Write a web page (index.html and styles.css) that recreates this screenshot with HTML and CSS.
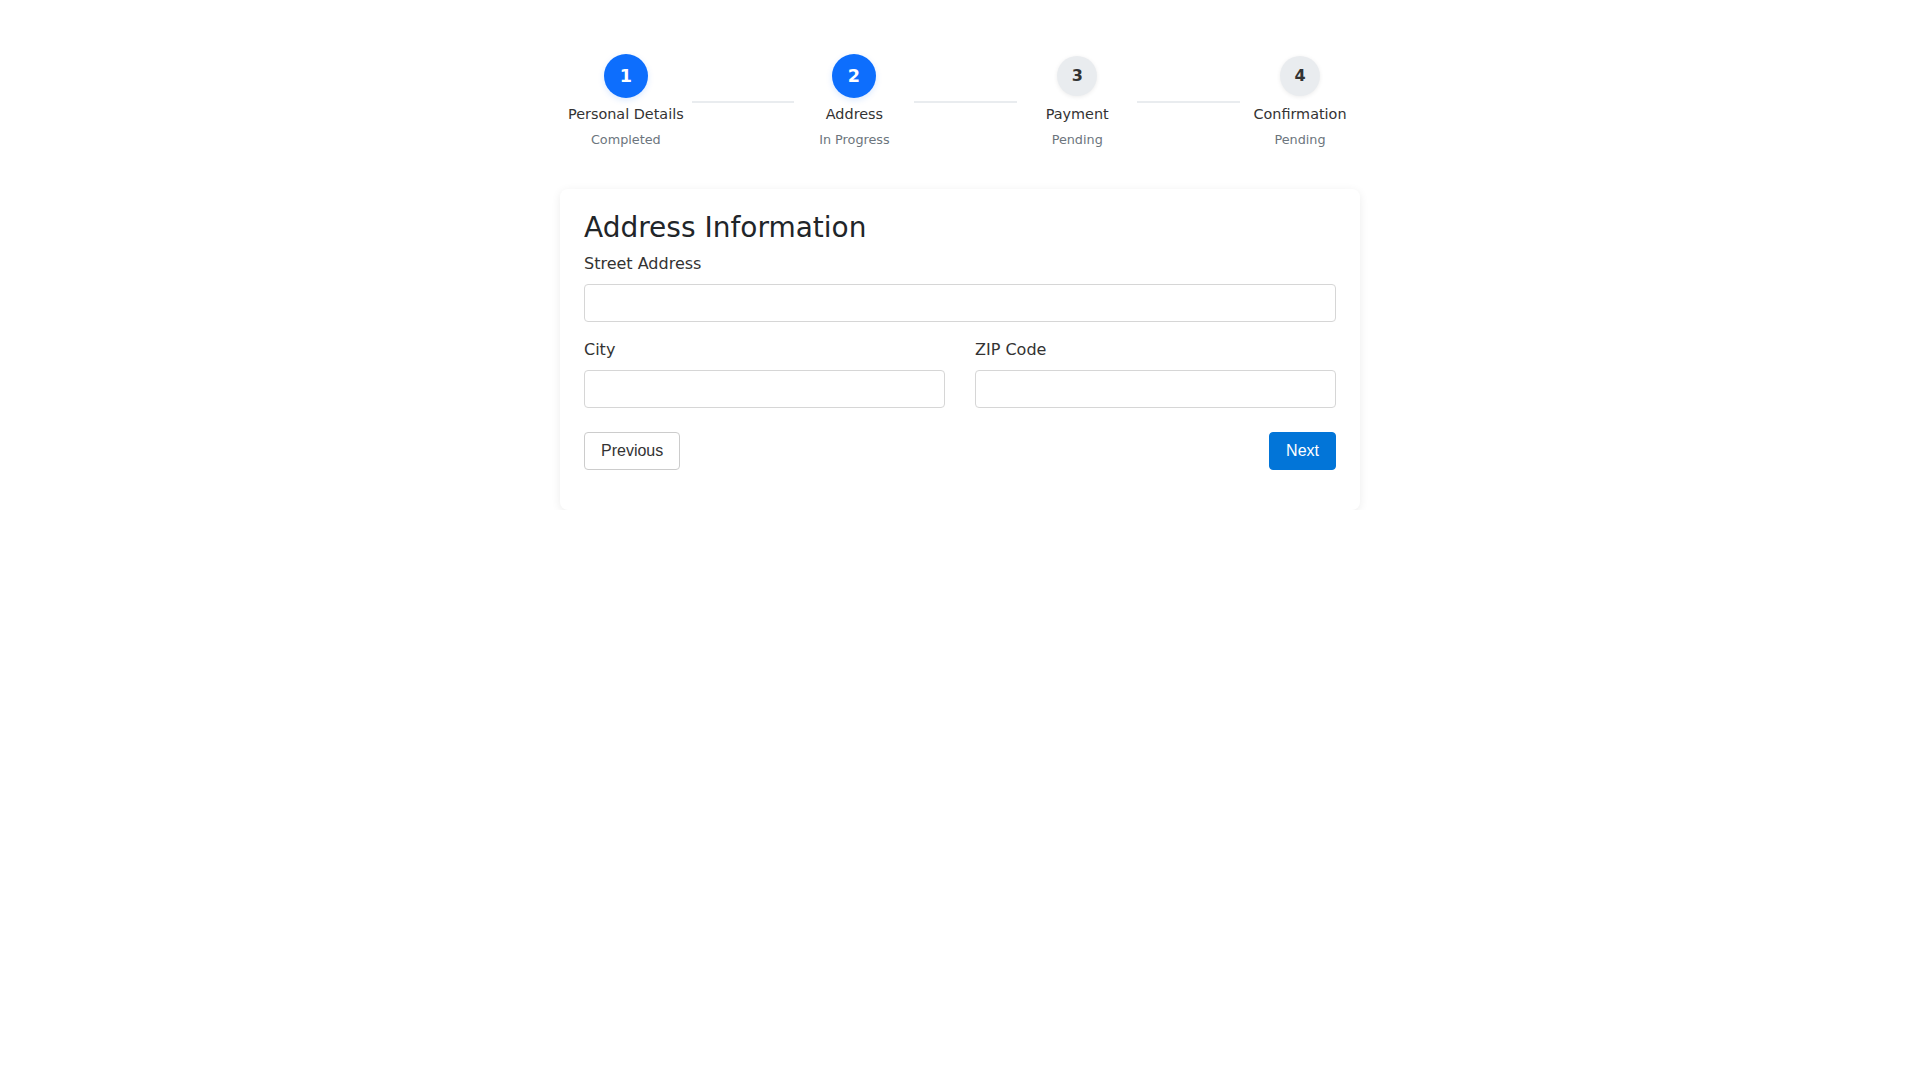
FILE: index.html
```html
<!DOCTYPE html>
<html lang="en">
<head>
    <meta charset="UTF-8">
    <meta name="viewport" content="width=device-width, initial-scale=1.0">
    <title>Checkout - Address</title>
    <link rel="stylesheet" href="styles.css">
</head>
<body>
    <div class="wizard">
        <div class="stepper">
            <div class="step done">
                <div class="step-circle">1</div>
                <div class="step-title">Personal Details</div>
                <div class="step-status">Completed</div>
            </div>
            <div class="step-line"></div>
            <div class="step active">
                <div class="step-circle">2</div>
                <div class="step-title">Address</div>
                <div class="step-status">In Progress</div>
            </div>
            <div class="step-line"></div>
            <div class="step">
                <div class="step-circle">3</div>
                <div class="step-title">Payment</div>
                <div class="step-status">Pending</div>
            </div>
            <div class="step-line"></div>
            <div class="step">
                <div class="step-circle">4</div>
                <div class="step-title">Confirmation</div>
                <div class="step-status">Pending</div>
            </div>
        </div>

        <div class="step-card">
            <h3>Address Information</h3>
            <form id="addressForm">
                <div class="form-group">
                    <label for="street">Street Address</label>
                    <input type="text" id="street" name="street">
                </div>

                <div class="form-row">
                    <div class="form-group">
                        <label for="city">City</label>
                        <input type="text" id="city" name="city">
                    </div>
                    <div class="form-group">
                        <label for="zip">ZIP Code</label>
                        <input type="text" id="zip" name="zip">
                    </div>
                </div>

                <div class="form-actions">
                    <button type="button" class="btn btn-outline">Previous</button>
                    <button type="submit" class="btn btn-primary">Next</button>
                </div>
            </form>
        </div>
    </div>
</body>
</html>
```

FILE: styles.css
```css
:root {
    --primary: #0d6efd;
    --button-blue: #0275d8;
    --text-dark: #212529;
    --text-muted: #6c757d;
    --step-idle: #e9ecef;
    --border: #d6d6d6;
}

* {
    box-sizing: border-box;
    margin: 0;
    padding: 0;
}

body {
    font-family: 'DejaVu Sans', 'Noto Sans', sans-serif;
    font-size: 16px;
    line-height: 1.5;
    color: var(--text-dark);
    background: #fff;
}

.wizard {
    width: 800px;
    margin: 0 auto;
    padding-top: 56px;
}

/* Stepper */
.stepper {
    display: flex;
    align-items: center;
    margin-bottom: 40px;
}

.step {
    display: flex;
    flex-direction: column;
    align-items: center;
    min-width: 120px;
    padding: 0 8px;
}

.step-circle {
    width: 40px;
    height: 40px;
    border-radius: 50%;
    background: var(--step-idle);
    color: #333;
    font-weight: bold;
    font-size: 16px;
    display: flex;
    justify-content: center;
    align-items: center;
    box-shadow: 0 1px 4px rgba(0, 0, 0, 0.08);
}

.step.done .step-circle,
.step.active .step-circle {
    background: var(--primary);
    color: #fff;
    transform: scale(1.1);
    box-shadow: 0 2px 6px rgba(13, 110, 253, 0.15);
}

.step-title {
    margin-top: 8px;
    font-size: 0.9rem;
    color: #333;
    white-space: nowrap;
}

.step-status {
    margin-top: 4px;
    font-size: 0.8rem;
    color: var(--text-muted);
}

.step-line {
    flex: 1;
    height: 2px;
    background: var(--step-idle);
}

/* Card */
.step-card {
    background: #fff;
    padding: 24px;
    border-radius: 8px;
    box-shadow: 0 2px 10px rgba(0, 0, 0, 0.08);
}

.step-card h3 {
    font-size: 28px;
    font-weight: 500;
    line-height: 1.1;
    margin-bottom: 8px;
    color: var(--text-dark);
}

.form-group {
    margin-bottom: 16px;
}

.form-group label {
    display: block;
    margin-bottom: 8px;
    color: #333;
}

.form-group input {
    display: block;
    width: 100%;
    height: 38px;
    padding: 6px 12px;
    border: 1px solid var(--border);
    border-radius: 4px;
    font-size: 16px;
    background: #fff;
}

.form-row {
    display: grid;
    grid-template-columns: 1fr 1fr;
    column-gap: 30px;
}

.form-actions {
    display: flex;
    justify-content: space-between;
    margin-top: 8px;
    margin-bottom: 16px;
}

.btn {
    font-family: 'Liberation Sans', Arial, sans-serif;
    font-size: 16px;
    line-height: 18px;
    padding: 9px 16px;
    border-radius: 4px;
    border: 1px solid transparent;
    cursor: pointer;
}

.btn-outline {
    background: #fff;
    color: #333;
    border-color: #ccc;
}

.btn-primary {
    background: var(--button-blue);
    color: #fff;
    border-color: var(--button-blue);
}
```
